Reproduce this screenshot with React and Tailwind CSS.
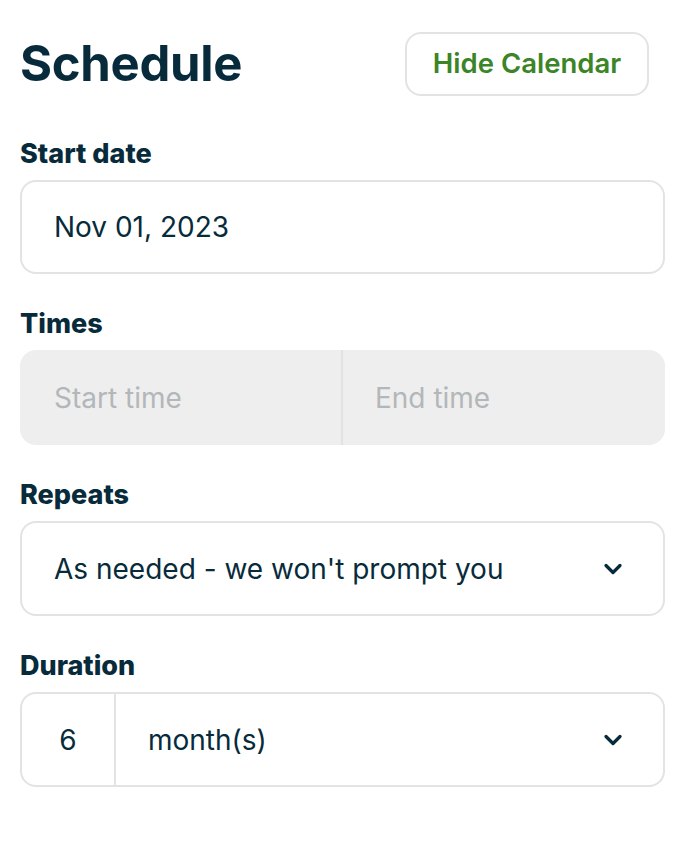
import { ChevronDown } from 'lucide-react';

const font = { fontFamily: 'Inter, "Noto Sans", sans-serif' };

function Label({ children }) {
  return <div className="text-[27px] leading-[32px] font-extrabold text-[#072b3b] mb-[10px]">{children}</div>;
}

export default function App() {
  return (
    <div className="min-h-screen bg-white pl-[20px] pr-[27px] pt-[32px]" style={font}>
      {/* header */}
      <div className="flex items-center justify-between">
        <h1 className="text-[49px] leading-[64px] font-bold text-[#072b3b] tracking-[-0.3px]">Schedule</h1>
        <button className="h-[64px] w-[244px] mr-[16px] rounded-[16px] border-2 border-[#e3e3e3] text-[27.5px] font-semibold text-[#3b8527]">
          Hide Calendar
        </button>
      </div>

      <div className="mt-[42px] flex flex-col gap-[34px]">
        <div>
          <Label>Start date</Label>
          <div className="h-[94px] rounded-[16px] border-2 border-[#e3e3e3] flex items-center px-[32px] text-[28px] text-[#072b3b]">
            Nov 01, 2023
          </div>
        </div>

        <div>
          <Label>Times</Label>
          <div className="h-[95px] rounded-[16px] bg-[#eeeeee] flex text-[28px] text-[#b3b7b9]">
            <div className="w-[323px] flex items-center pl-[34px] border-r-2 border-[#e2e2e2]">Start time</div>
            <div className="flex-1 flex items-center pl-[32px]">End time</div>
          </div>
        </div>

        <div>
          <Label>Repeats</Label>
          <div className="h-[95px] rounded-[16px] border-2 border-[#e3e3e3] flex items-center justify-between pl-[32px] pr-[36px] text-[28px] text-[#072b3b]">
            <span>As needed - we won't prompt you</span>
            <ChevronDown size={28} strokeWidth={2.8} className="text-[#072b3b]" />
          </div>
        </div>

        <div>
          <Label>Duration</Label>
          <div className="h-[95px] rounded-[16px] border-2 border-[#e3e3e3] flex items-center text-[28px] text-[#072b3b]">
            <div className="w-[94px] h-full flex items-center justify-center border-r-2 border-[#e3e3e3]">6</div>
            <div className="flex-1 flex items-center justify-between pl-[32px] pr-[36px]">
              <span>month(s)</span>
              <ChevronDown size={28} strokeWidth={2.8} className="text-[#072b3b]" />
            </div>
          </div>
        </div>
      </div>
    </div>
  );
}
